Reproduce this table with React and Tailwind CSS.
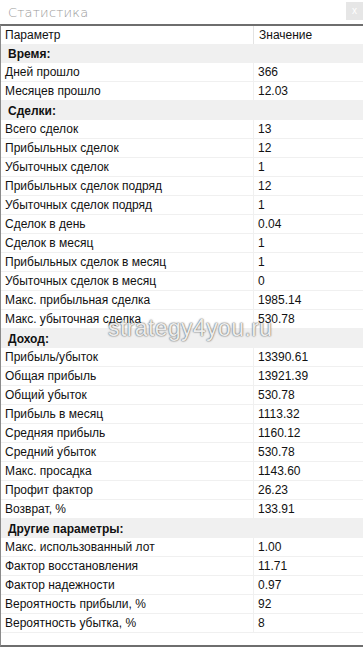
import React from 'react';

const rows = [
  { section: 'Время:' },
  ['Дней прошло', '366'],
  ['Месяцев прошло', '12.03'],
  { section: 'Сделки:' },
  ['Всего сделок', '13'],
  ['Прибыльных сделок', '12'],
  ['Убыточных сделок', '1'],
  ['Прибыльных сделок подряд', '12'],
  ['Убыточных сделок подряд', '1'],
  ['Сделок в день', '0.04'],
  ['Сделок в месяц', '1'],
  ['Прибыльных сделок в месяц', '1'],
  ['Убыточных сделок в месяц', '0'],
  ['Макс. прибыльная сделка', '1985.14'],
  ['Макс. убыточная сделка', '530.78'],
  { section: 'Доход:' },
  ['Прибыль/убыток', '13390.61'],
  ['Общая прибыль', '13921.39'],
  ['Общий убыток', '530.78'],
  ['Прибыль в месяц', '1113.32'],
  ['Средняя прибыль', '1160.12'],
  ['Средний убыток', '530.78'],
  ['Макс. просадка', '1143.60'],
  ['Профит фактор', '26.23'],
  ['Возврат, %', '133.91'],
  { section: 'Другие параметры:' },
  ['Макс. использованный лот', '1.00'],
  ['Фактор восстановления', '11.71'],
  ['Фактор надежности', '0.97'],
  ['Вероятность прибыли, %', '92'],
  ['Вероятность убытка, %', '8'],
];

export default function App() {
  return (
    <div className="relative w-[363px] h-[647px] bg-white flex flex-col overflow-hidden font-['Liberation_Sans',Arial,sans-serif] text-[12px] text-[#111]">
      {/* Title bar */}
      <div className="h-[24px] flex justify-between shrink-0">
        <span className="pl-[8px] pt-[3px] text-[13px] text-[#9a9a9a] font-['DejaVu_Sans',sans-serif] font-light tracking-[0.2px]">Статистика</span>
        <div className="mt-[2px] w-[17px] h-[18px] bg-[#e6e6e6] text-white text-[10px] leading-[18px] text-center">x</div>
      </div>

      {/* Table */}
      <div className="flex-1 border-t-2 border-l border-b-2 border-[#6e6e6e] border-l-[#8a8a8a] flex flex-col">
        <div className="grid grid-cols-[253px_1fr] h-[18px] items-center">
          <div className="pl-[4px] border-r border-[#e3e3e3] h-full flex items-center">Параметр</div>
          <div className="pl-[5px]">Значение</div>
        </div>
        {rows.map((r, i) =>
          r.section ? (
            <div key={i} className="h-[19px] bg-[#f0f0f0] pl-[7px] flex items-center font-bold">
              {r.section}
            </div>
          ) : (
            <div key={i} className="grid grid-cols-[253px_1fr] h-[19px] border-b border-[#f0f0f0]">
              <div className="pl-[4px] border-r border-[#f0f0f0] flex items-center">{r[0]}</div>
              <div className="pl-[4px] flex items-center">{r[1]}</div>
            </div>
          )
        )}
      </div>

      {/* Watermark */}
      <div className="absolute left-[108px] top-[311px] text-[23px] tracking-[0.4px] text-[#ececec] font-['Liberation_Sans',Arial,sans-serif] [text-shadow:0_0_2px_#6a6a6a,0_0_1px_#6a6a6a] pointer-events-none">
        strategy4you.ru
      </div>
    </div>
  );
}
